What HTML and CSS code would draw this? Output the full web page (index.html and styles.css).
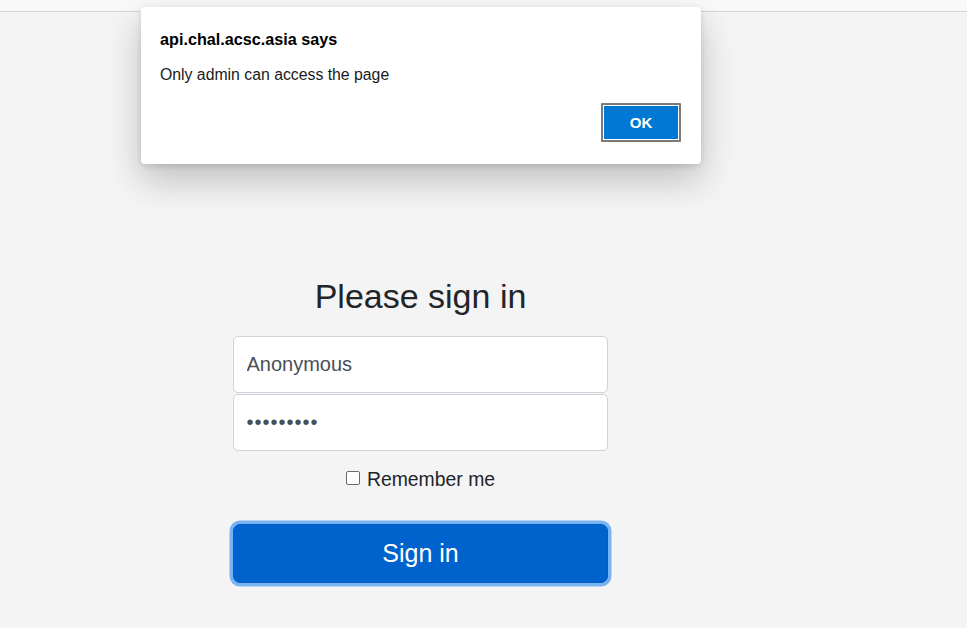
FILE: index.html
```html
<!DOCTYPE html>
<html lang="en">
<head>
<meta charset="utf-8">
<title>Please sign in</title>
<link rel="stylesheet" href="styles.css">
</head>
<body>
<div class="topbar"></div>
<main class="page">
  <form class="signin">
    <h1 class="title">Please sign in</h1>
    <input class="field" type="text" value="Anonymous">
    <input class="field field-second" type="password" value="123456789">
    <div class="remember">
      <label class="remember-label"><input class="check" type="checkbox"><span>Remember me</span></label>
    </div>
    <button class="btn" type="button">Sign in</button>
  </form>
</main>
<div class="dialog" role="alertdialog">
  <div class="dialog-title">api.chal.acsc.asia says</div>
  <div class="dialog-msg">Only admin can access the page</div>
  <div class="dialog-actions">
    <button class="ok" type="button">OK</button>
  </div>
</div>
</body>
</html>
```
FILE: styles.css
```css
html, body {
  margin: 0;
  padding: 0;
}
body {
  background: #f4f4f4;
  font-family: "Liberation Sans", Arial, sans-serif;
  color: #212529;
  width: 967px;
  height: 628px;
  overflow: hidden;
}
.topbar {
  height: 11px;
  background: #f9f9f9;
  border-bottom: 1px solid #d6d6d6;
}
.page {
  padding-top: 263px;
}
.signin {
  width: 375px;
  margin-left: 233px;
  display: flex;
  flex-direction: column;
}
.title {
  margin: 0 0 19px;
  font-size: 34px;
  font-weight: 400;
  line-height: 42px;
  text-align: center;
  color: #212529;
}
.field {
  box-sizing: border-box;
  height: 57px;
  width: 375px;
  margin: 0;
  padding: 0 12.5px;
  border: 1px solid #ced4da;
  border-radius: 5px;
  background: #fff;
  font-family: "Liberation Sans", Arial, sans-serif;
  font-size: 20px;
  color: #495057;
  outline: none;
}
.field-second {
  margin-top: 1px;
  letter-spacing: 1px;
}
.remember {
  display: flex;
  justify-content: center;
  margin-top: 13px;
  height: 30px;
}
.remember-label {
  display: flex;
  align-items: center;
  gap: 7px;
  font-size: 19.4px;
  color: #212529;
}
.check {
  appearance: none;
  -webkit-appearance: none;
  box-sizing: border-box;
  width: 14px;
  height: 14px;
  margin: 0;
  border: 1px solid #6b6b6b;
  border-radius: 2px;
  background: #fff;
  position: relative;
  top: -1px;
}
.btn {
  margin-top: 30px;
  margin-left: 0;
  box-sizing: border-box;
  width: 375px;
  height: 59px;
  border: 1px solid #005cbf;
  border-radius: 7px;
  background: #0062cc;
  color: #fff;
  font-family: "Liberation Sans", Arial, sans-serif;
  font-size: 25px;
  box-shadow: 0 0 0 3.5px #7ab3f4;
  padding: 0;
}
.dialog {
  position: absolute;
  left: 141px;
  top: 7px;
  width: 560px;
  height: 157px;
  box-sizing: border-box;
  background: #fff;
  border-radius: 4px;
  box-shadow: 0 16px 36px rgba(0, 0, 0, 0.22), 0 2px 6px rgba(0, 0, 0, 0.12);
  padding: 0 20px 0 19px;
  display: flex;
  flex-direction: column;
}
.dialog-title {
  margin-top: 20px;
  font-size: 16.2px;
  font-weight: 700;
  line-height: 24px;
  color: #000;
}
.dialog-msg {
  margin-top: 14px;
  font-size: 15.8px;
  line-height: 20px;
  color: #1a1a1a;
}
.dialog-actions {
  display: flex;
  justify-content: flex-end;
  margin-top: 18px;
}
.ok {
  box-sizing: border-box;
  width: 80px;
  height: 39px;
  border: 2px solid #7a7a7a;
  background: #0078d4;
  box-shadow: inset 0 0 0 1px #fff;
  color: #fff;
  font-family: "Liberation Sans", Arial, sans-serif;
  font-size: 15px;
  font-weight: 700;
  padding: 0;
  border-radius: 1px;
}
```
